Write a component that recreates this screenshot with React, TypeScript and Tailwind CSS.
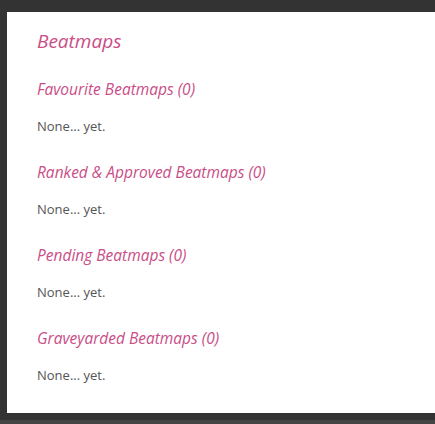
import React from "react";

const sections = [
  "Favourite Beatmaps (0)",
  "Ranked & Approved Beatmaps (0)",
  "Pending Beatmaps (0)",
  "Graveyarded Beatmaps (0)",
];

export default function App() {
  return (
    <div className="w-[435px] h-[424px] overflow-hidden bg-[#333333] flex flex-col" style={{ fontFamily: '"Open Sans", "Noto Sans", sans-serif' }}>
      <div className="pl-[7px] pt-[12px]">
        <div className="bg-white h-[401px] w-[440px] pl-[30px] pt-[17px] flex flex-col">
          <h2 className="italic text-[19px] leading-[24px] text-[#c94e87] font-normal">Beatmaps</h2>
          <div className="flex flex-col gap-[27px] mt-[26px]">
            {sections.map((s) => (
              <div key={s} className="flex flex-col gap-[18px]">
                <h3 className="italic text-[15.5px] leading-[20px] text-[#c94e87]">{s}</h3>
                <p className="text-[13px] leading-[18px] text-[#555555]">None... yet.</p>
              </div>
            ))}
          </div>
        </div>
      </div>
      <div className="mt-auto h-[4px] bg-[#444444]" />
    </div>
  );
}
